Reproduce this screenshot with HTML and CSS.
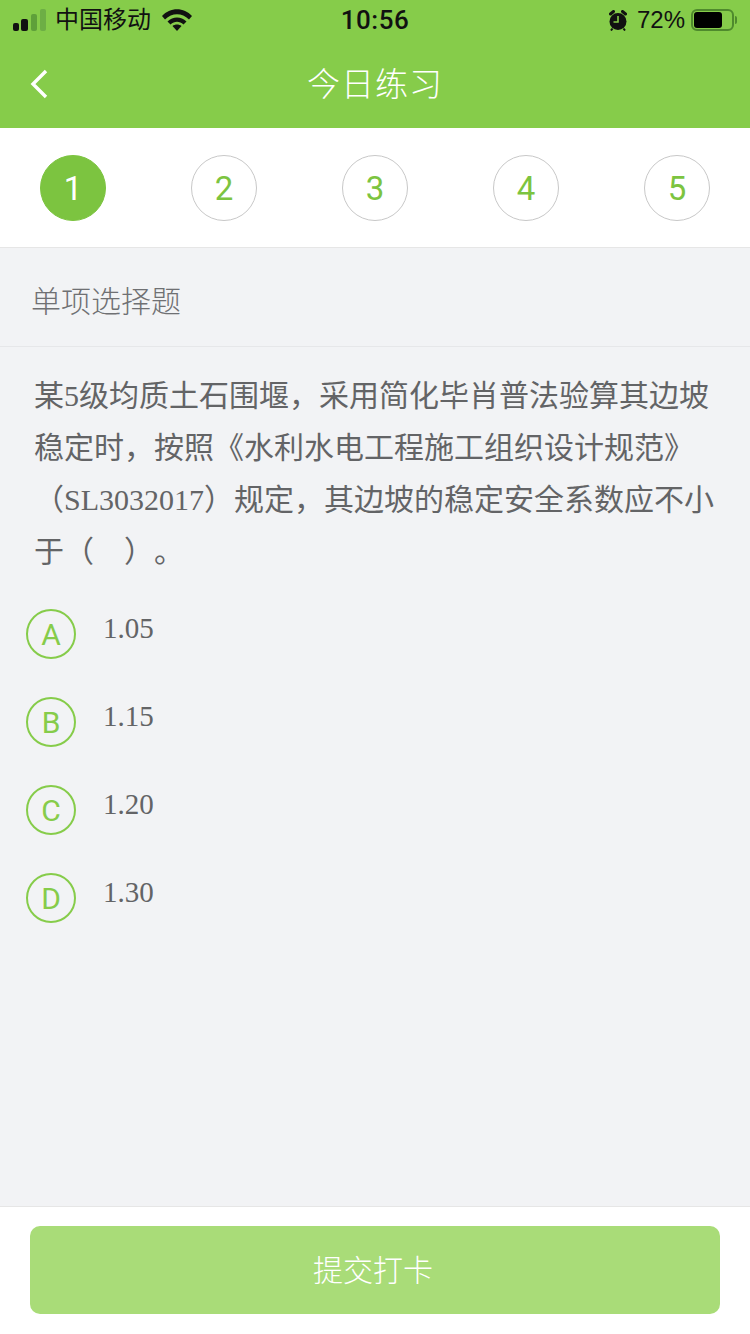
FILE: index.html
```html
<!DOCTYPE html>
<html lang="zh-CN">
  <head>
    <meta charset="UTF-8" />
    <meta name="viewport" content="width=device-width, initial-scale=1.0" />
    <title>今日练习</title>
    <link rel="stylesheet" href="styles.css">
  </head>
  <body>
    <div class="page">
      <header class="top">
        <div class="status">
          <div class="status-left">
            <svg class="signal" width="33" height="22" viewBox="0 0 33 22">
              <rect x="0" y="14" width="6" height="8" rx="2" fill="#111"/>
              <rect x="8" y="10" width="7" height="12" rx="2" fill="#111"/>
              <rect x="18" y="5" width="6" height="17" rx="2" fill="#5fa03a"/>
              <rect x="27" y="0" width="6" height="22" rx="2" fill="#6dae45"/>
            </svg>
            <span class="carrier">中国移动</span>
            <svg class="wifi" width="30" height="22" viewBox="0 0 30 22">
              <path d="M0 7 C8 -2 22 -2 30 7 L27 10.5 C20 3.5 10 3.5 3 10.5 Z" fill="#111"/>
              <path d="M5.5 12.5 C11 7 19 7 24.5 12.5 L21.5 15.5 C17.5 11.8 12.5 11.8 8.5 15.5 Z" fill="#111"/>
              <path d="M10.5 17 C13 15 17 15 19.5 17 L15 22 Z" fill="#111"/>
            </svg>
          </div>
          <span class="clock">10:56</span>
          <div class="status-right">
            <svg class="alarm" width="18" height="21" viewBox="0 0 18 21">
              <circle cx="9" cy="11.5" r="8.5" fill="#111"/>
              <path d="M9 6 V12 H4.5" fill="none" stroke="#86cc4a" stroke-width="1.6"/>
              <path d="M1.5 4 L4.5 1.5 M16.5 4 L13.5 1.5" stroke="#111" stroke-width="3" stroke-linecap="round"/>
              <path d="M3.5 18.5 L2 20.5 M14.5 18.5 L16 20.5" stroke="#111" stroke-width="2"/>
            </svg>
            <span class="percent">72%</span>
            <div class="battery"><div class="battery-fill"></div></div>
            <div class="battery-cap"></div>
          </div>
        </div>
        <div class="nav">
          <svg class="back" width="20" height="32" viewBox="0 0 20 32">
            <path d="M17 3 L4 16 L17 29" fill="none" stroke="#fff" stroke-width="3.4"/>
          </svg>
          <h1 class="nav-title">今日练习</h1>
        </div>
      </header>

      <div class="steps">
        <div class="step step-on">1</div>
        <div class="step">2</div>
        <div class="step">3</div>
        <div class="step">4</div>
        <div class="step">5</div>
      </div>

      <div class="type">单项选择题</div>

      <main class="body">
        <p class="question">某5级均质土石围堰，采用简化毕肖普法验算其边坡稳定时，按照《水利水电工程施工组织设计规范》（SL3032017）规定，其边坡的稳定安全系数应不小于（&nbsp;&nbsp;&nbsp;&nbsp;）。</p>
        <div class="options">
          <div class="option"><span class="letter">A</span><span class="value">1.05</span></div>
          <div class="option"><span class="letter">B</span><span class="value">1.15</span></div>
          <div class="option"><span class="letter">C</span><span class="value">1.20</span></div>
          <div class="option"><span class="letter">D</span><span class="value">1.30</span></div>
        </div>
      </main>

      <footer class="bottom">
        <button class="submit">提交打卡</button>
      </footer>
    </div>
  </body>
</html>
```

FILE: styles.css
```css
* {
  box-sizing: border-box;
}

body {
  margin: 0;
  background-color: #f2f3f5;
  font-family: "Liberation Sans", "Noto Sans CJK SC", sans-serif;
}

.page {
  width: 750px;
  height: 1334px;
  display: flex;
  flex-direction: column;
  overflow: hidden;
}

/* 顶部 */
.top {
  height: 128px;
  background-color: #86cc4a;
  flex-shrink: 0;
}

.status {
  height: 40px;
  display: grid;
  grid-template-columns: 1fr auto 1fr;
  align-items: center;
  padding: 0 13px;
  color: #111;
}

.status-left {
  display: flex;
  align-items: center;
}

.signal {
  margin-right: 9px;
}

.carrier {
  font-size: 24px;
  line-height: 36px;
  margin-right: 11px;
}

.clock {
  font-family: Roboto, sans-serif;
  font-size: 26px;
  font-weight: 500;
  letter-spacing: 0.5px;
}

.status-right {
  display: flex;
  align-items: center;
  justify-content: flex-end;
}

.alarm {
  margin-right: 10px;
}

.percent {
  font-size: 24px;
  margin-right: 6px;
}

.battery {
  width: 43px;
  height: 22px;
  border: 2px solid #4f8a2d;
  border-radius: 6px;
  padding: 1px;
}

.battery-fill {
  width: 28px;
  height: 100%;
  background-color: #000;
  border-radius: 3px;
}

.battery-cap {
  width: 2px;
  height: 8px;
  margin-left: 1px;
  background-color: #4f8a2d;
  border-radius: 0 2px 2px 0;
}

.nav {
  height: 88px;
  position: relative;
  display: flex;
  align-items: center;
  justify-content: center;
}

.back {
  position: absolute;
  left: 29px;
  top: 28px;
}

.nav-title {
  margin: 0 0 4px;
  font-size: 33px;
  font-weight: 300;
  color: #fff;
  letter-spacing: 1px;
}

/* 步骤 */
.steps {
  height: 120px;
  background-color: #fff;
  border-bottom: 1px solid #e6e6e6;
  display: flex;
  justify-content: space-between;
  padding: 27px 40px 0;
  flex-shrink: 0;
}

.step {
  width: 66px;
  height: 66px;
  border-radius: 50%;
  border: 1px solid #c8c8c8;
  color: #7cc440;
  font-family: Roboto, sans-serif;
  font-size: 33px;
  display: flex;
  align-items: center;
  justify-content: center;
}

.step-on {
  background-color: #7cc440;
  border-color: #7cc440;
  color: #fff;
}

.type {
  height: 99px;
  padding: 3px 31px 0;
  display: flex;
  align-items: center;
  font-size: 30px;
  font-weight: 300;
  color: #6f7073;
  border-bottom: 1px solid #e6e7e9;
  flex-shrink: 0;
}

/* 题目 */
.body {
  flex: 1;
  padding: 23px 35px 0 26px;
}

.question {
  margin: 0 0 0 8px;
  font-family: "Liberation Serif", "Noto Sans CJK SC", serif;
  font-size: 30px;
  line-height: 52px;
  color: #636466;
  text-spacing-trim: space-all;
}

.options {
  margin-top: 31px;
}

.option {
  height: 88px;
  display: flex;
  align-items: flex-start;
}

.letter {
  width: 50px;
  height: 50px;
  border: 2px solid #86cc4a;
  border-radius: 50%;
  color: #86cc4a;
  font-family: Roboto, sans-serif;
  font-size: 30px;
  display: flex;
  align-items: center;
  justify-content: center;
  margin-right: 27px;
}

.value {
  font-family: "Liberation Serif", serif;
  font-size: 29px;
  line-height: 38px;
  color: #636466;
}

/* 底部按钮 */
.bottom {
  height: 128px;
  background-color: #fff;
  border-top: 1px solid #e6e6e6;
  padding: 19px 30px 0;
  flex-shrink: 0;
}

.submit {
  display: block;
  width: 100%;
  height: 88px;
  border: none;
  border-radius: 10px;
  padding: 0 4px 4px 0;
  background-color: #a9dc78;
  color: #fff;
  font-family: inherit;
  font-size: 30px;
  font-weight: 300;
}
```
